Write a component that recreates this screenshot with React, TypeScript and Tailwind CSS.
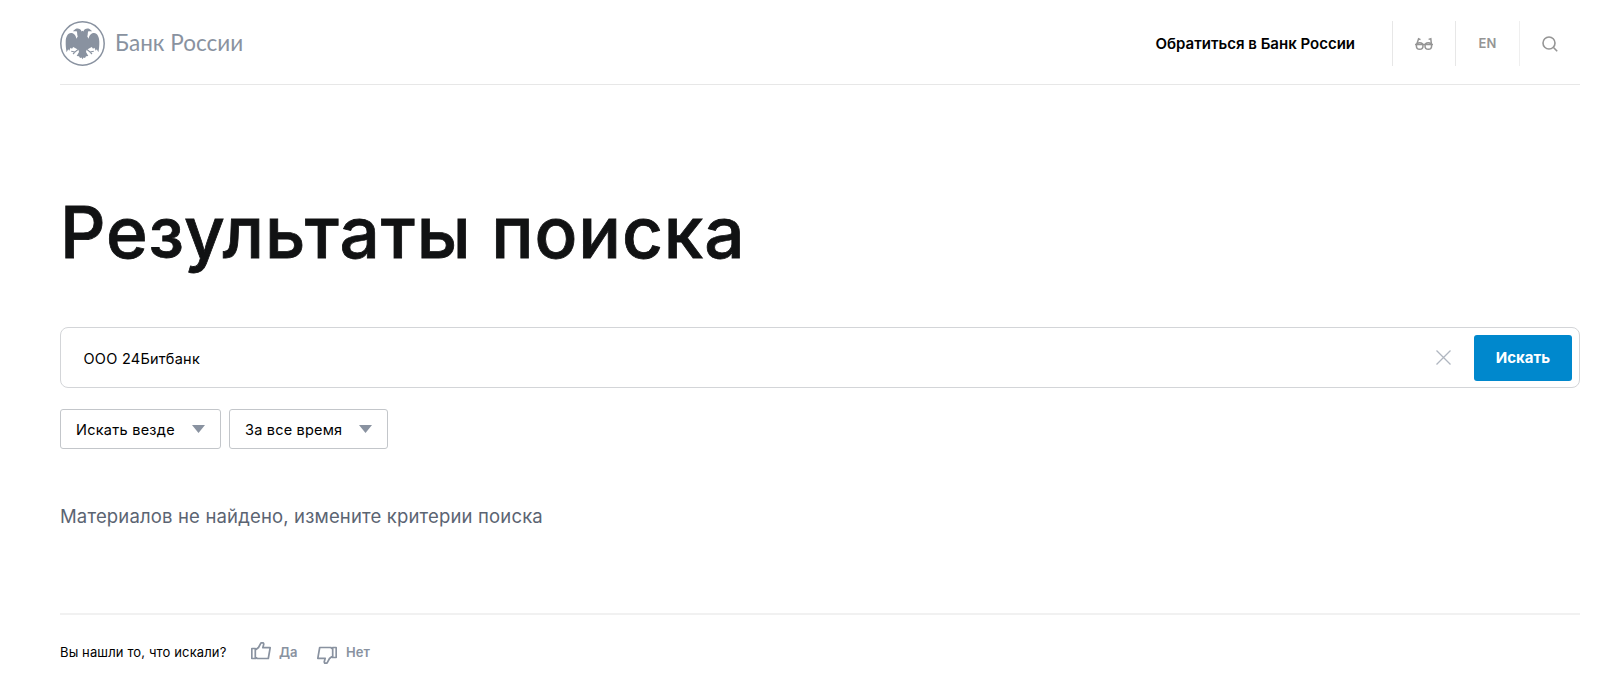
import React from "react";

function Emblem() {
  return (
    <svg className="mt-px h-[46px] w-[46px] shrink-0" viewBox="0 0 46 46" fill="none">
      <circle cx="22.5" cy="22.5" r="21.700" stroke="#8992a0" strokeWidth="1.5" />
      <g fill="#8992a0">
        <path d="M12.800 10.200L15.500 8C18 6.800 21 8 21.600 10.500L22.500 9.800L23.400 10.500C24 8 27 6.800 29.500 8L32.200 10.200L28.300 10.300C27.500 11.300 28.200 13 27.300 15.500C27.800 16.300 28.300 17 28.700 17.800C29 14.500 31 12 34 12C37.500 12.200 39.200 16 39.300 20.500C39.400 24.500 39 28 38.400 31.300L36.800 28.200L35.700 29.700L34.500 26.800L33 27.800L31.800 26L29 27.500L26.500 29L26 31L28.300 35L26 35.300L25 37L23.500 36.600L22.500 38.300L21.500 36.600L20 37L19 35.300L16.700 35L19 31L18.500 29L16 27.500L13.200 26L12 27.800L10.500 26.800L9.300 29.700L8.200 28.200L6.600 31.300C6 28 5.600 24.500 5.700 20.500C5.800 16 7.500 12.200 11 12C14 12 16 14.500 16.300 17.800C16.700 17 17.200 16.300 17.700 15.500C16.800 13 17.500 11.300 16.700 10.300Z" />
      </g>
      <path
        d="M18 28.500L15 31L11.200 30.300M15 31L13 33M27 28.500L30 31L33.800 30.300M30 31L32 33"
        stroke="#8992a0"
        strokeWidth="1.100"
      />
    </svg>
  );
}

function Glasses() {
  return (
    <svg className="h-[14px] w-[18px]" viewBox="0 0 18 14" fill="none" stroke="#959595" strokeWidth="1.5">
      <circle cx="4.700" cy="9" r="3.300" />
      <circle cx="13.300" cy="9" r="3.300" />
      <path d="M0 7.500H18M1.500 8L3.600 1.800L5.500 2.600M16.500 8L15.800 1.800L13.600 2.400" />
    </svg>
  );
}

function Thumb({ className }: { className: string }) {
  return (
    <svg className={className} viewBox="0 0 20 18" fill="none" stroke="#8992a0" strokeWidth="1.700" strokeLinejoin="round">
      <path d="M0.800 6.500H4.300V16.500H0.800ZM4.300 8L7.500 5.500L10 0.900H12.300L12.800 2L11.800 5.700H19.200L17.300 16.500H6.200L4.300 15" />
    </svg>
  );
}

function Select({ label, className }: { label: string; className: string }) {
  return (
    <button
      className={`flex h-10 items-center justify-between rounded-[3px] border border-[#c3c6ca] bg-white pl-[15px] pr-[15px] text-[14.5px] text-black ${className}`}
    >
      <span className="whitespace-nowrap pt-px">{label}</span>
      <svg className="h-2 w-[13px]" viewBox="0 0 13 8">
        <path d="M0 0H13L6.500 8Z" fill="#8992a0" />
      </svg>
    </button>
  );
}

export default function App() {
  return (
    <div className="h-[675px] overflow-hidden bg-white pl-[60px] pr-5 font-['Inter','Liberation_Sans',sans-serif] text-black">
      <header className="flex h-[85px] items-start justify-between border-b border-[#e7e7e7] pt-5">
        <a className="flex h-[46px] items-center">
          <Emblem />
          <span className="ml-[9px] whitespace-nowrap font-['Lato','Liberation_Sans',sans-serif] text-[22.5px] leading-[46px] tracking-[0.03px] text-[#8992a0]">
            Банк России
          </span>
        </a>
        <div className="flex h-[46px] items-center">
          <a className="mr-[37px] whitespace-nowrap pt-0.5 text-[15px] font-semibold">Обратиться в Банк России</a>
          <button className="mt-px flex h-[45px] w-[63px] items-center justify-center border-l border-[#e7e7e7]">
            <Glasses />
          </button>
          <button className="mt-px flex h-[45px] w-[64px] items-center justify-center border-l border-[#e7e7e7] pt-px text-[13px] font-semibold tracking-[0.2px] text-[#959595]">
            EN
          </button>
          <button className="mt-px flex h-[45px] w-[61px] items-center justify-center border-l border-[#efefef]">
            <svg className="h-4 w-4" viewBox="0 0 16 16" fill="none" stroke="#959595" strokeWidth="1.600">
              <circle cx="7" cy="7" r="6" />
              <path d="M11.500 11.500L15.200 15.200" />
            </svg>
          </button>
        </div>
      </header>

      <h1 className="mt-[99px] h-[96px] whitespace-nowrap text-[71px] font-medium leading-[96px] tracking-[0.9px] text-[#111213] [-webkit-text-stroke:0.8px_#111213]">
        Результаты поиска
      </h1>

      <form className="mt-[47px] flex h-[61px] items-center rounded-lg border border-[#d3d5d8] pl-[22.5px] pr-[7px]">
        <span className="grow pt-0.5 text-[14.5px] tracking-[0.26px]">ООО 24Битбанк</span>
        <svg className="mr-[23px] h-[15px] w-[15px]" viewBox="0 0 15 15" stroke="#b0b6c0" strokeWidth="1.300">
          <path d="M0.500 0.500L14.500 14.500M14.500 0.500L0.500 14.500" />
        </svg>
        <button type="button" className="h-[46px] w-[98px] rounded-[3px] bg-[#0088cd] pt-0.5 text-[15px] font-bold text-white">
          Искать
        </button>
      </form>

      <div className="mt-[21px] flex gap-2">
        <Select label="Искать везде" className="w-[161px] tracking-[0.26px]" />
        <Select label="За все время" className="w-[159px] tracking-[0.2px]" />
      </div>

      <p className="mt-[54px] h-[26px] whitespace-nowrap text-[18.5px] leading-[26px] tracking-[0.16px] text-[#5b6472]">
        Материалов не найдено, измените критерии поиска
      </p>

      <footer className="mt-[84px] flex h-[61px] items-start border-t-2 border-[#f1f1f1] pt-[27px]">
        <span className="w-[191px] whitespace-nowrap text-[13px] leading-5 tracking-[0.13px]">Вы нашли то, что искали?</span>
        <Thumb className="h-[18px] w-5" />
        <span className="ml-2 w-[38px] text-[13px] font-semibold leading-5 text-[#8992a0]">Да</span>
        <Thumb className="mt-1 h-[18px] w-5 rotate-180" />
        <span className="ml-[9px] text-[13px] font-semibold leading-5 text-[#8992a0]">Нет</span>
      </footer>
    </div>
  );
}
